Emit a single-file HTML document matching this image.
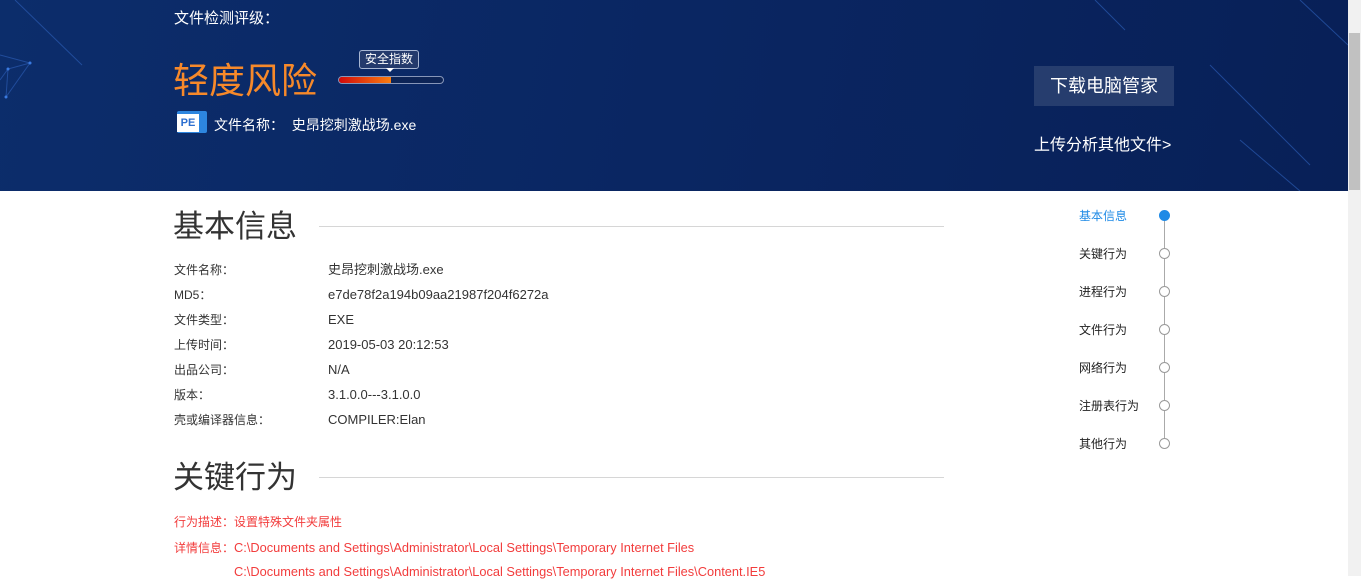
<!DOCTYPE html>
<html><head><meta charset="utf-8">
<style>
*{margin:0;padding:0;box-sizing:border-box}
html,body{width:1361px;height:576px;overflow:hidden;background:#fff;font-family:"Liberation Sans","Noto Sans CJK SC",sans-serif}
.hdr{position:absolute;left:0;top:0;width:1348px;height:191px;background:linear-gradient(100deg,#0c2d6b 0%,#0a2662 50%,#082057 100%);overflow:hidden}
.a{position:absolute;white-space:nowrap}
.sb{position:absolute;left:1348px;top:0;width:13px;height:576px;background:#f1f1f1}
.sb i{position:absolute;left:1px;top:33px;width:11px;height:157px;background:#c1c1c1}
.row{position:absolute;left:174px;font-size:12px;color:#333;line-height:14px;white-space:nowrap}
.row span{position:absolute;left:154px;top:0;font-size:13px;white-space:nowrap}
.nav{position:absolute;left:1079px;font-size:12px;color:#222}
.dot{position:absolute;left:1159px;width:11px;height:11px;border:1px solid #999;border-radius:50%;background:#fff}
.red{font-size:12px;color:#f23c3c}
.red b{font-weight:normal;font-size:12.8px}
</style></head><body>
<div class="hdr">
<svg width="1348" height="191" style="position:absolute;left:0;top:0">
<g stroke="#2a5ab0" stroke-width="1" fill="none" opacity=".7">
<line x1="15" y1="0" x2="82" y2="65"/>
<polyline points="0,55 30,63 8,69 6,97 30,63"/>
<line x1="8" y1="69" x2="0" y2="80"/>
<line x1="1095" y1="0" x2="1125" y2="30"/>
<line x1="1300" y1="0" x2="1348" y2="45"/>
<line x1="1210" y1="65" x2="1310" y2="165"/>
<line x1="1240" y1="140" x2="1300" y2="191"/>
</g>
<g fill="#3a7ae0"><circle cx="30" cy="63" r="1.5"/><circle cx="8" cy="69" r="1.5"/><circle cx="6" cy="97" r="1.5"/></g>
</svg>
<div class="a" style="left:174px;top:7px;font-size:15px;color:#fff">文件检测评级：</div>
<div class="a" style="left:173px;top:60px;font-size:36px;color:#f7892a;line-height:42px">轻度风险</div>
<div class="a" style="left:359px;top:50px;width:60px;height:19px;border:1px solid #a8b6d2;border-radius:3px;background:#243a6c;color:#fff;font-size:12px;text-align:center;line-height:17px">安全指数</div>
<div class="a" style="left:386px;top:68px;width:0;height:0;border:4px solid transparent;border-top-color:#fff"></div>
<div class="a" style="left:338px;top:76px;width:106px;height:8px;border:1px solid #8796b8;border-radius:4px;background:#0d2456;overflow:hidden"><div style="width:52px;height:100%;background:linear-gradient(90deg,#d20a0a,#f97d10)"></div></div>
<div class="a" style="left:177px;top:111px;width:30px;height:22px;background:#2d86e0;border-radius:2px"></div>
<div class="a" style="left:177px;top:114px;width:22px;height:18px;background:#fff;color:#2d6fd0;font-size:11px;font-weight:bold;line-height:18px;text-align:center">PE</div>
<div class="a" style="left:214px;top:115px;font-size:14px;color:#fff">文件名称：&nbsp;&nbsp;史昂挖刺激战场.exe</div>
<div class="a" style="left:1034px;top:66px;width:140px;height:40px;background:#263d6e;color:#fff;font-size:18px;line-height:40px;text-align:center">下载电脑管家</div>
<div class="a" style="left:1034px;top:131px;font-size:16px;color:#fff">上传分析其他文件&gt;</div>
</div>
<div class="sb"><i></i></div>

<div class="a" style="left:173px;top:207px;font-size:31px;color:#333;line-height:40px">基本信息</div>
<div class="a" style="left:319px;top:226px;width:625px;height:1px;background:#d6d6d6"></div>
<div class="row" style="top:263px">文件名称：<span>史昂挖刺激战场.exe</span></div>
<div class="row" style="top:288px">MD5：<span>e7de78f2a194b09aa21987f204f6272a</span></div>
<div class="row" style="top:313px">文件类型：<span>EXE</span></div>
<div class="row" style="top:338px">上传时间：<span>2019-05-03 20:12:53</span></div>
<div class="row" style="top:363px">出品公司：<span>N/A</span></div>
<div class="row" style="top:388px">版本：<span>3.1.0.0---3.1.0.0</span></div>
<div class="row" style="top:413px">壳或编译器信息：<span>COMPILER:Elan</span></div>

<div class="a" style="left:173px;top:458px;font-size:31px;color:#333;line-height:40px">关键行为</div>
<div class="a" style="left:319px;top:477px;width:625px;height:1px;background:#d6d6d6"></div>
<div class="a red" style="left:174px;top:513px">行为描述：设置特殊文件夹属性</div>
<div class="a red" style="left:174px;top:539px">详情信息：<b>C:\Documents and Settings\Administrator\Local Settings\Temporary Internet Files</b></div>
<div class="a red" style="left:234px;top:564px"><b>C:\Documents and Settings\Administrator\Local Settings\Temporary Internet Files\Content.IE5</b></div>

<div class="a" style="left:1164px;top:216px;width:1px;height:228px;background:#aaa"></div>
<div class="nav" style="top:207px;color:#1e8ae6">基本信息</div>
<div class="dot" style="top:210px;background:#1e8ae6;border-color:#1e8ae6"></div>
<div class="nav" style="top:245px">关键行为</div><div class="dot" style="top:248px"></div>
<div class="nav" style="top:283px">进程行为</div><div class="dot" style="top:286px"></div>
<div class="nav" style="top:321px">文件行为</div><div class="dot" style="top:324px"></div>
<div class="nav" style="top:359px">网络行为</div><div class="dot" style="top:362px"></div>
<div class="nav" style="top:397px">注册表行为</div><div class="dot" style="top:400px"></div>
<div class="nav" style="top:435px">其他行为</div><div class="dot" style="top:438px"></div>
</body></html>
